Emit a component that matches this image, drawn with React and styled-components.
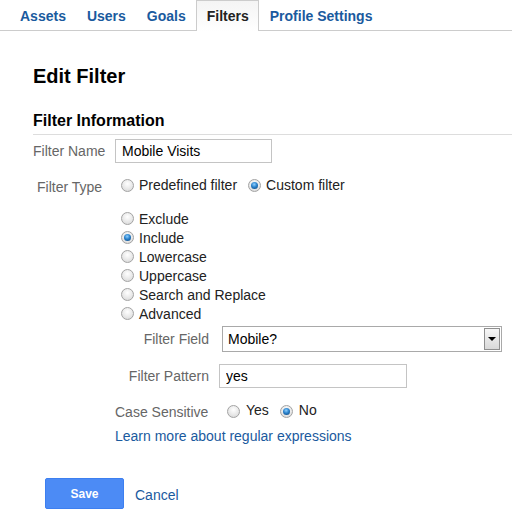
import React, { useState } from 'react'
import styled, { createGlobalStyle } from 'styled-components'

const GlobalStyle = createGlobalStyle`
body {
    margin: 0;
    background: #fff;
    font-family: Arial, "Liberation Sans", sans-serif;
    font-size: 14px;
    color: #222;
}
`

const Page = styled.div`
width: 512px;
height: 522px;
overflow: hidden;
`

const TabBar = styled.ul`
list-style: none;
margin: 0;
padding: 0 0 0 9px;
display: flex;
height: 30px;
border-bottom: 1px solid #ccc;
`

const Tab = styled.li`
box-sizing: border-box;
height: 31px;
padding: 7px 9px 0 10px;
border: 1px solid transparent;
border-bottom: 0;
font-weight: bold;
font-size: 14px;
line-height: 16px;
color: #1a5a9e;
cursor: pointer;
&.active{
    color: #222;
    border-color: #ccc;
    background: linear-gradient(#f4f4f4, #fff);
}
`

const Content = styled.div`
padding: 0 0 0 33px;
`

const Title = styled.h1`
margin: 33px 0 0;
font-size: 20px;
line-height: 24px;
font-weight: bold;
color: #000;
`

const SectionTitle = styled.h2`
margin: 23px 0 0;
padding-bottom: 3px;
font-size: 16px;
line-height: 20px;
font-weight: bold;
color: #000;
border-bottom: 1px solid #ddd;
`

const Row = styled.div`
display: flex;
align-items: center;
margin-top: ${p => p.top || 0}px;
margin-left: ${p => p.indent || 0}px;
`

const Label = styled.label`
color: #666;
width: ${p => p.width || 82}px;
padding-left: ${p => p.pad || 0}px;
padding-top: ${p => p.drop || 0}px;
text-align: ${p => p.right ? 'right' : 'left'};
flex-shrink: 0;
`

const TextInput = styled.input`
box-sizing: border-box;
width: ${p => p.width}px;
height: 24px;
margin-left: ${p => p.gap || 0}px;
padding: 0 6px;
border: 1px solid #c4c4c4;
font-family: inherit;
font-size: 14px;
color: #000;
outline: none;
`

const RadioGroup = styled.div`
display: flex;
flex-direction: ${p => p.vertical ? 'column' : 'row'};
margin-left: ${p => p.gap || 0}px;
`

const Option = styled.label`
display: flex;
align-items: center;
height: 19px;
margin-right: ${p => p.spacing || 0}px;
color: #222;
cursor: pointer;
`

const RadioDot = styled.span`
box-sizing: border-box;
width: 13px;
height: 13px;
border-radius: 50%;
border: 1px solid #a3a3a3;
background: radial-gradient(circle at 50% 35%, #fff 0%, #e6e6e6 60%, #d2d2d2 100%);
margin-right: ${p => p.space || 5}px;
margin-top: ${p => p.low || 0}px;
display: flex;
align-items: center;
justify-content: center;
flex-shrink: 0;
&::after{
    content: '';
    display: ${p => p.checked ? 'block' : 'none'};
    width: 7px;
    height: 7px;
    border-radius: 50%;
    background: radial-gradient(circle at 45% 35%, #8fd0ff 0%, #2a82cc 45%, #0c3f73 100%);
}
`

const Radio = ({ checked, onClick, children, spacing, space, low }) => (
    <Option spacing={spacing} onClick={onClick}>
        <RadioDot checked={checked} space={space} low={low} />
        {children}
    </Option>
)

const SelectBox = styled.div`
box-sizing: border-box;
width: 280px;
height: 26px;
margin-left: 13px;
border: 1px solid #a9a9a9;
display: flex;
align-items: center;
justify-content: space-between;
padding: 0 1px 0 5px;
font-size: 14px;
color: #000;
`

const SelectArrow = styled.span`
box-sizing: border-box;
width: 16px;
height: 22px;
border: 1px solid #8f8f8f;
background: linear-gradient(#f7f7f7, #d9d9d9);
display: flex;
align-items: center;
justify-content: center;
&::after{
    content: '';
    border-left: 4px solid transparent;
    border-right: 4px solid transparent;
    border-top: 4px solid #000;
}
`

const Link = styled.a`
display: block;
color: #1a5a9e;
text-decoration: none;
line-height: 19px;
cursor: pointer;
`

const Actions = styled.div`
display: flex;
align-items: center;
margin: 32px 0 0 12px;
`

const SaveButton = styled.button`
box-sizing: border-box;
width: 79px;
height: 31px;
border: 1px solid #3d7ff0;
border-radius: 2px;
background: #4c8bf5;
color: #fff;
font-family: inherit;
font-weight: bold;
font-size: 12px;
cursor: pointer;
`

const CancelLink = styled(Link)`
margin: 3px 0 0 11px;
`

const tabs = ['Assets', 'Users', 'Goals', 'Filters', 'Profile Settings']
const actions = ['Exclude', 'Include', 'Lowercase', 'Uppercase', 'Search and Replace', 'Advanced']

const App = () => {
    const [kind, setKind] = useState('custom')
    const [action, setAction] = useState('Include')
    const [caseSensitive, setCaseSensitive] = useState(false)

    return (
        <Page>
            <GlobalStyle />
            <TabBar>
                {tabs.map(t => (
                    <Tab key={t} className={t === 'Filters' ? 'active' : ''}>{t}</Tab>
                ))}
            </TabBar>
            <Content>
                <Title>Edit Filter</Title>
                <SectionTitle>Filter Information</SectionTitle>

                <Row top={4}>
                    <Label>Filter Name</Label>
                    <TextInput width={157} defaultValue='Mobile Visits' />
                </Row>

                <Row top={12}>
                    <Label pad={4} drop={4}>Filter Type</Label>
                    <RadioGroup gap={2}>
                        <Radio spacing={11} checked={kind === 'predefined'} onClick={() => setKind('predefined')}>Predefined filter</Radio>
                        <Radio checked={kind === 'custom'} onClick={() => setKind('custom')}>Custom filter</Radio>
                    </RadioGroup>
                </Row>

                <Row top={14} indent={88}>
                    <RadioGroup vertical>
                        {actions.map(a => (
                            <Radio key={a} checked={action === a} onClick={() => setAction(a)}>{a}</Radio>
                        ))}
                    </RadioGroup>
                </Row>

                <Row top={3} indent={82}>
                    <Label width={94} right>Filter Field</Label>
                    <SelectBox>
                        Mobile?
                        <SelectArrow />
                    </SelectBox>
                </Row>

                <Row top={12} indent={82}>
                    <Label width={94} right>Filter Pattern</Label>
                    <TextInput width={188} gap={10} defaultValue='yes' />
                </Row>

                <Row top={12} indent={82}>
                    <Label width={94} drop={4}>Case Sensitive</Label>
                    <RadioGroup gap={18}>
                        <Radio spacing={11} space={6} low={3} checked={caseSensitive} onClick={() => setCaseSensitive(true)}>Yes</Radio>
                        <Radio space={6} low={3} checked={!caseSensitive} onClick={() => setCaseSensitive(false)}>No</Radio>
                    </RadioGroup>
                </Row>

                <Row top={7} indent={82}>
                    <Link>Learn more about regular expressions</Link>
                </Row>

                <Actions>
                    <SaveButton>Save</SaveButton>
                    <CancelLink>Cancel</CancelLink>
                </Actions>
            </Content>
        </Page>
    )
}

export default App
